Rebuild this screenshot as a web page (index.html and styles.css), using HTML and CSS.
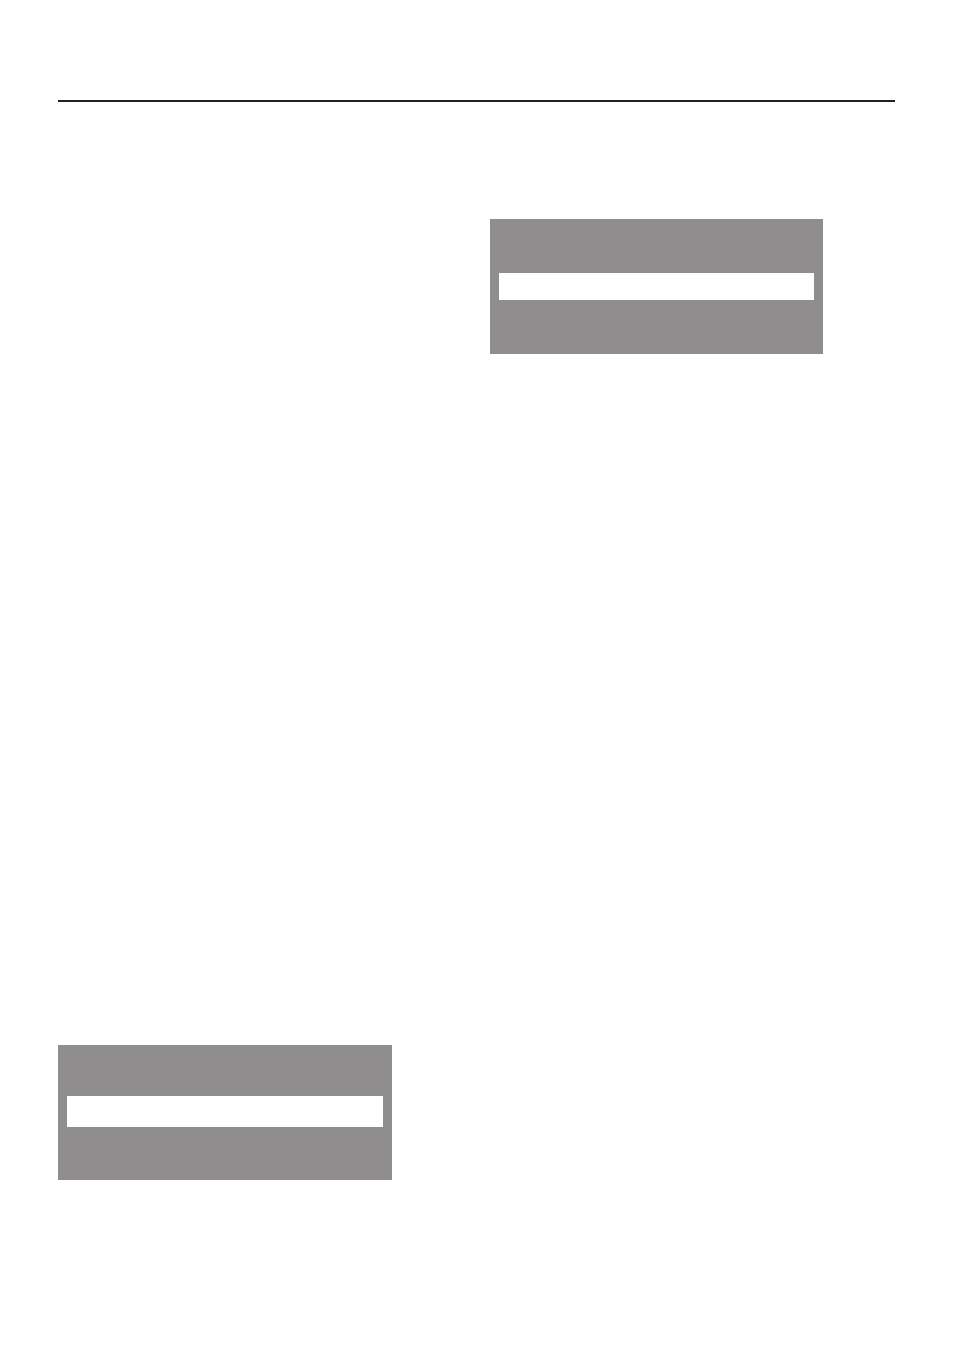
FILE: index.html
```html
<!DOCTYPE html>
<html lang="en">
<head>
<meta charset="utf-8">
<title>Page</title>
<link rel="stylesheet" href="styles.css">
</head>
<body>
<div class="page">
  <hr class="rule">
  <div class="columns">
    <div class="col col-left">
      <div class="panel panel-bottom">
        <div class="bar bar-tall"></div>
      </div>
    </div>
    <div class="col col-right">
      <div class="panel panel-top">
        <div class="bar"></div>
      </div>
    </div>
  </div>
</div>
</body>
</html>
```

FILE: styles.css
```css
html, body {
  margin: 0;
  padding: 0;
  background: #ffffff;
  font-family: "Liberation Sans", Arial, sans-serif;
}

.page {
  width: 954px;
  height: 1351px;
  box-sizing: border-box;
  padding: 100px 59px 0 58px;
}

.rule {
  margin: 0;
  border: 0;
  height: 2px;
  background: #231f20;
}

.columns {
  display: grid;
  grid-template-columns: 432px 1fr;
  align-items: start;
}

.panel {
  background: #8f8d8e;
  height: 135px;
  box-sizing: border-box;
}

.panel-top {
  width: 333px;
  margin-top: 117px;
  padding: 54px 9px 0 9px;
}

.panel-bottom {
  width: 334px;
  margin-top: 943px;
  padding: 51px 9px 0 9px;
}

.bar {
  background: #ffffff;
  height: 27px;
}

.bar-tall {
  height: 31px;
}
```
